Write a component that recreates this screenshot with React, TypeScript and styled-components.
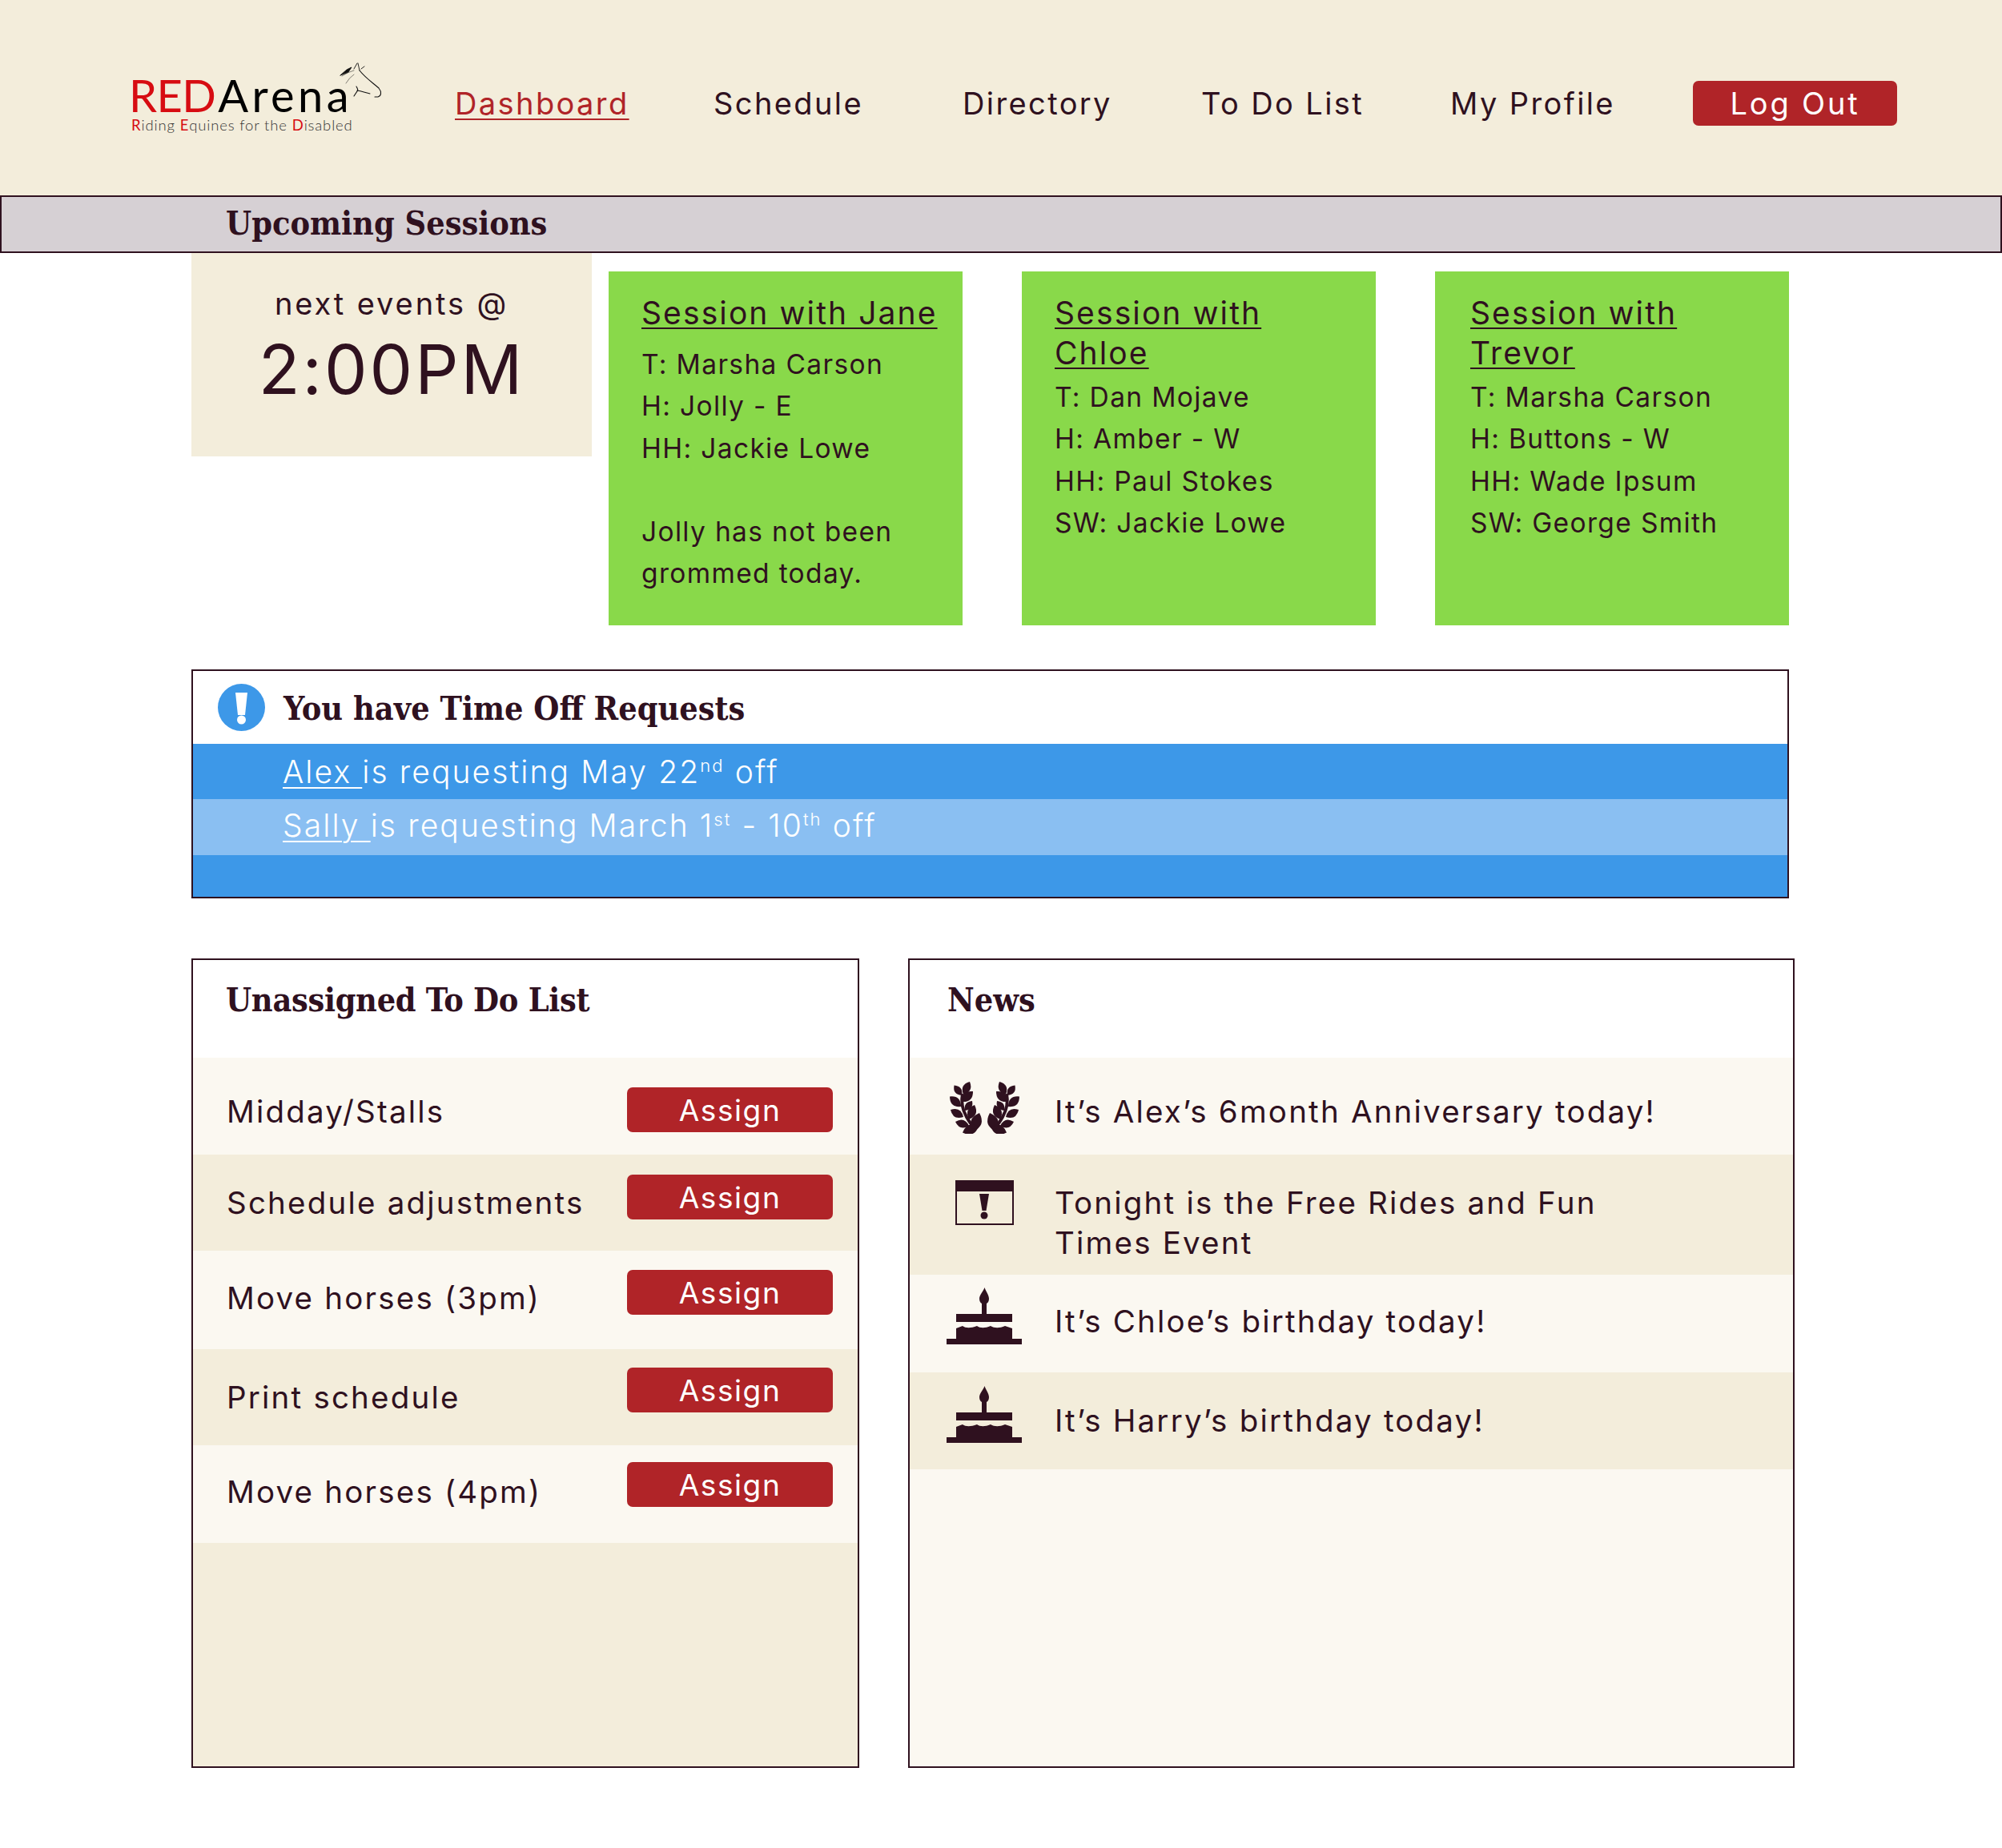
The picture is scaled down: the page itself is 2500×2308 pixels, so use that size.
import styled, { createGlobalStyle } from "styled-components";

const dark = "#2f111f";
const cream = "#f3eddb";
const offWhite = "#fbf8f1";
const red = "#b02428";

const GlobalStyle = createGlobalStyle`
	html, body {
		margin: 0;
		padding: 0;
		background: #fff;
	}
	body {
		font-family: "Inter", "Liberation Sans", sans-serif;
		color: ${dark};
	}
`;

const Page = styled.div`
	width: 2500px;
	height: 2308px;
	overflow: hidden;
`;

const Header = styled.header`
	display: flex;
	align-items: flex-start;
	height: 244px;
	box-sizing: border-box;
	background: ${cream};
`;

const Logo = styled.div`
	position: relative;
	margin: 92px 0 0 161px;
	width: 407px;
`;

const LogoName = styled.div`
	font-family: "Lato", sans-serif;
	font-size: 56px;
	line-height: 54px;
	color: #000;
	letter-spacing: 4.4px;
`;

const LogoRed = styled.span`
	color: #d70c12;
	letter-spacing: -0.6px;
	margin-right: 3px;
`;

const LogoTag = styled.div`
	font-family: "Lato", sans-serif;
	font-weight: 300;
	font-size: 18.5px;
	line-height: 20px;
	letter-spacing: 0.85px;
	color: #333;
	padding-left: 3px;
`;

const TagInitial = styled.span`
	color: #d70c12;
	font-weight: 400;
`;

const HorseMark = styled.div`
	position: absolute;
	left: 249px;
	top: -22px;
`;

const Nav = styled.nav`
	display: grid;
	grid-template-columns: 323px 311px 298px 311px 303px 255px;
	align-items: center;
	margin-top: 101px;
	height: 56px;
`;

const NavLink = styled.a<{ $active?: boolean }>`
	font-size: 38px;
	letter-spacing: 2.4px;
	font-weight: 400;
	color: ${(p) => (p.$active ? red : dark)};
	text-decoration: ${(p) => (p.$active ? "underline" : "none")};
	text-decoration-thickness: 2px;
	text-underline-offset: 5px;
`;

const LogOut = styled.button`
	height: 56px;
	width: 255px;
	border: 0;
	border-radius: 7px;
	background: ${red};
	color: #fff;
	font-family: inherit;
	font-size: 38px;
	letter-spacing: 2.8px;
	padding: 0;
`;

const SectionBar = styled.div`
	height: 72px;
	box-sizing: border-box;
	border: 2px solid ${dark};
	background: #d6d0d4;
	padding-left: 280px;
`;

const SectionTitle = styled.h2`
	margin: 0;
	font-family: "DejaVu Serif Condensed", "DejaVu Serif", serif;
	font-size: 41px;
	line-height: 66px;
	font-weight: 700;
`;

const Sessions = styled.section`
	display: flex;
	align-items: flex-start;
	margin-left: 239px;
`;

const NextBox = styled.div`
	width: 500px;
	height: 254px;
	margin-right: 21px;
	background: ${cream};
	text-align: center;
`;

const NextLabel = styled.div`
	font-size: 38px;
	letter-spacing: 2.9px;
	line-height: 50px;
	margin-top: 38px;
`;

const NextTime = styled.div`
	font-size: 85px;
	line-height: 100px;
	font-weight: 400;
	letter-spacing: 3px;
	margin-top: 8px;
`;

const Cards = styled.div`
	display: flex;
	gap: 74px;
	margin-top: 23px;
`;

const Card = styled.article<{ $pad: number }>`
	width: 442px;
	height: 442px;
	box-sizing: border-box;
	background: #89d94a;
	padding: 27px 0 0 ${(p) => p.$pad}px;
`;

const CardTitle = styled.h3<{ $gap: number }>`
	margin: 0 0 ${(p) => p.$gap}px;
	font-size: 39px;
	line-height: 50px;
	font-weight: 400;
	letter-spacing: 2.1px;
	text-decoration: underline;
	text-decoration-thickness: 2px;
	text-underline-offset: 4px;
`;

const CardLine = styled.div`
	font-size: 33.5px;
	line-height: 52.3px;
	letter-spacing: 1.35px;
	min-height: 52.3px;
`;

const Alert = styled.section`
	width: 1995px;
	height: 286px;
	box-sizing: border-box;
	margin: 55px 0 0 239px;
	border: 2px solid ${dark};
	background: #3d98e8;
`;

const AlertHead = styled.div`
	display: flex;
	align-items: center;
	gap: 23px;
	height: 91px;
	padding-left: 31px;
	background: #fff;
`;

const Heading = styled.h2<{ $tight?: boolean }>`
	margin: 2px 0 0;
	font-family: "DejaVu Serif Condensed", "DejaVu Serif", serif;
	font-size: 41px;
	font-weight: 700;
	letter-spacing: ${(p) => (p.$tight ? "-0.3px" : "0")};
`;

const RequestRow = styled.div<{ $light?: boolean }>`
	height: ${(p) => (p.$light ? 70 : 69)}px;
	line-height: ${(p) => (p.$light ? 66 : 70)}px;
	padding-left: 112px;
	background: ${(p) => (p.$light ? "#8abff2" : "transparent")};
	color: #fff;
	font-size: 39px;
	letter-spacing: 2.1px;
	font-weight: 300;
	u {
		text-decoration-thickness: 2px;
		text-underline-offset: 5px;
	}
	sup {
		font-size: 22px;
		line-height: 0;
		vertical-align: 14px;
	}
`;

const Panels = styled.div`
	display: flex;
	gap: 61px;
	margin: 75px 0 0 239px;
`;

const Panel = styled.section<{ $width: number; $fill: string }>`
	width: ${(p) => p.$width}px;
	height: 1011px;
	box-sizing: border-box;
	border: 2px solid ${dark};
	background: ${(p) => p.$fill};
`;

const PanelHead = styled.div<{ $pad: number }>`
	height: 122px;
	padding: 24px 0 0 ${(p) => p.$pad}px;
	box-sizing: border-box;
	background: #fff;
`;

const TodoRow = styled.div<{ $alt?: boolean; $height: number }>`
	display: flex;
	justify-content: space-between;
	height: ${(p) => p.$height}px;
	padding: 0 31px 0 42px;
	background: ${(p) => (p.$alt ? cream : offWhite)};
`;

const RowText = styled.span<{ $top: number }>`
	font-size: 38.5px;
	line-height: 50px;
	letter-spacing: 2.2px;
	padding-top: ${(p) => p.$top}px;
`;

const AssignButton = styled.button<{ $top: number }>`
	width: 257px;
	height: 56px;
	margin-top: ${(p) => p.$top}px;
	border: 0;
	border-radius: 7px;
	background: ${red};
	color: #fff;
	font-family: inherit;
	font-size: 37px;
	letter-spacing: 1.6px;
	padding: 0;
`;

const NewsRow = styled.div<{ $alt?: boolean; $height: number }>`
	display: flex;
	align-items: flex-start;
	height: ${(p) => p.$height}px;
	background: ${(p) => (p.$alt ? cream : "transparent")};
`;

const IconSlot = styled.div<{ $top: number; $left: number }>`
	width: ${(p) => 181 - p.$left}px;
	padding: ${(p) => p.$top}px 0 0 ${(p) => p.$left}px;
	line-height: 0;
`;

const Wheat = () => {
	// base x, base y, tip x, tip y: left sprig, traced from the reference
	const leaves = [
		[15, 17, 5.5, 4.5],
		[17, 16, 25, 0],
		[14, 31, 0, 18.5],
		[15, 25, 29, 12],
		[17, 44, 1, 35],
		[19, 36, 28, 24],
		[24, 47, 31, 29],
		[24, 55, 7, 50],
		[29, 62, 37, 39],
		[36, 56, 16, 63.5],
	];
	const leaf = (b: number[], key: string) => {
		const [bx, by, tx, ty] = b;
		const dx = tx - bx;
		const dy = ty - by;
		const mx = (bx + tx) / 2;
		const my = (by + ty) / 2;
		const w = 0.55;
		return (
			<path
				key={key}
				d={`M${bx} ${by}Q${mx - dy * w} ${my + dx * w} ${tx} ${ty}Q${mx + dy * w} ${my - dx * w} ${bx} ${by}Z`}
			/>
		);
	};
	const sprig = (prefix: string) => (
		<>
			{leaves.map((l, i) => leaf(l, prefix + i))}
			<path d="M16 15Q13 30 21 44T33 58" fill="none" stroke={dark} strokeWidth="4" />
		</>
	);
	return (
		<svg width="87" height="65" viewBox="0 0 87 65" fill={dark}>
			<g>{sprig("l")}</g>
			<g transform="translate(87 0) scale(-1 1)">{sprig("r")}</g>
		</svg>
	);
};

const CalendarAlert = () => (
	<svg width="73" height="56" viewBox="0 0 73 56">
		<rect x="1" y="1" width="71" height="54" fill="none" stroke={dark} strokeWidth="2" />
		<rect width="73" height="14" fill={dark} />
		<path d="M30 17H42L38.5 38H33.5Z" fill={dark} />
		<circle cx="36" cy="44" r="4.5" fill={dark} />
	</svg>
);

const Cake = () => (
	<svg width="95" height="71" viewBox="0 0 95 71" fill={dark}>
		<path d="M47.5 0C49 5 53 9 53 14C53 17 51.5 19.5 50 20V33H44V20C42.5 19.5 41 17 41 14C41 9 46 5 47.5 0Z" />
		<rect x="12" y="33" width="70" height="10" />
		<path d="M12 51L20 48C24 51 30 51 38 48C42 51 48 51 55 48C60 51 66 51 73 48L82 51V64H94V71H0V64H12Z" />
	</svg>
);

const AlertIcon = () => (
	<svg width="59" height="59" viewBox="0 0 59 59">
		<circle cx="29.5" cy="29.5" r="29.5" fill="#3d98e8" />
		<path d="M22 11H37L34 39H25Z" fill="#fff" />
		<circle cx="29.5" cy="45" r="5.5" fill="#fff" />
	</svg>
);

const Horse = () => (
	<svg viewBox="0 0 80 70" width="80" height="70" fill="none" stroke="#111" strokeWidth="0.9" strokeLinecap="round">
		<path d="M15 24L23 17L29 14L25 20Z" fill="#111" />
		<path d="M17 25Q24 20 32 18M22 34Q26 27 32 23" strokeWidth="0.5" />
		<path d="M32 16L36 9M37 9L39 18M41 16L45 13" />
		<path d="M39 18C46 27 55 33 63 40C67 45 66 50 62 51L58 51" strokeWidth="1.1" />
		<path d="M35 38Q38 43 36 44L32 50M36 43C42 44 47 46 52 47" strokeWidth="1.1" />
	</svg>
);

const navItems = ["Dashboard", "Schedule", "Directory", "To Do List", "My Profile"];

const todos = [
	{ label: "Midday/Stalls", height: 121, text: 42, button: 37 },
	{ label: "Schedule adjustments", height: 120, text: 35, button: 25 },
	{ label: "Move horses (3pm)", height: 123, text: 34, button: 24 },
	{ label: "Print schedule", height: 120, text: 35, button: 23 },
	{ label: "Move horses (4pm)", height: 122, text: 33, button: 21 },
];

export default function App() {
	return (
		<Page>
			<GlobalStyle />
			<Header>
				<Logo>
					<LogoName>
						<LogoRed>RED</LogoRed>Arena
					</LogoName>
					<LogoTag>
						<TagInitial>R</TagInitial>iding <TagInitial>E</TagInitial>quines for the <TagInitial>D</TagInitial>isabled
					</LogoTag>
					<HorseMark>
						<Horse />
					</HorseMark>
				</Logo>
				<Nav>
					{navItems.map((item, i) => (
						<NavLink key={item} $active={i === 0}>
							{item}
						</NavLink>
					))}
					<LogOut>Log Out</LogOut>
				</Nav>
			</Header>

			<SectionBar>
				<SectionTitle>Upcoming Sessions</SectionTitle>
			</SectionBar>

			<Sessions>
				<NextBox>
					<NextLabel>next events @</NextLabel>
					<NextTime>2:00PM</NextTime>
				</NextBox>
				<Cards>
					<Card $pad={41}>
						<CardTitle $gap={13}>Session with Jane</CardTitle>
						<CardLine>T: Marsha Carson</CardLine>
						<CardLine>H: Jolly - E</CardLine>
						<CardLine>HH: Jackie Lowe</CardLine>
						<CardLine />
						<CardLine>Jolly has not been</CardLine>
						<CardLine>grommed today.</CardLine>
					</Card>
					<Card $pad={41}>
						<CardTitle $gap={4}>
							Session with
							<br />
							Chloe
						</CardTitle>
						<CardLine>T: Dan Mojave</CardLine>
						<CardLine>H: Amber - W</CardLine>
						<CardLine>HH: Paul Stokes</CardLine>
						<CardLine>SW: Jackie Lowe</CardLine>
					</Card>
					<Card $pad={44}>
						<CardTitle $gap={4}>
							Session with
							<br />
							Trevor
						</CardTitle>
						<CardLine>T: Marsha Carson</CardLine>
						<CardLine>H: Buttons - W</CardLine>
						<CardLine>HH: Wade Ipsum</CardLine>
						<CardLine>SW: George Smith</CardLine>
					</Card>
				</Cards>
			</Sessions>

			<Alert>
				<AlertHead>
					<AlertIcon />
					<Heading>You have Time Off Requests</Heading>
				</AlertHead>
				<RequestRow>
					<u>Alex </u>is requesting May 22<sup>nd</sup> off
				</RequestRow>
				<RequestRow $light>
					<u>Sally </u>is requesting March 1<sup>st</sup> - 10<sup>th</sup> off
				</RequestRow>
			</Alert>

			<Panels>
				<Panel $width={834} $fill={cream}>
					<PanelHead $pad={41}>
						<Heading $tight>Unassigned To Do List</Heading>
					</PanelHead>
					{todos.map((todo, i) => (
						<TodoRow key={todo.label} $alt={i % 2 === 1} $height={todo.height}>
							<RowText $top={todo.text}>{todo.label}</RowText>
							<AssignButton $top={todo.button}>Assign</AssignButton>
						</TodoRow>
					))}
				</Panel>
				<Panel $width={1107} $fill={offWhite}>
					<PanelHead $pad={47}>
						<Heading>News</Heading>
					</PanelHead>
					<NewsRow $height={121}>
						<IconSlot $top={30} $left={50}>
							<Wheat />
						</IconSlot>
						<RowText $top={42}>It’s Alex’s 6month Anniversary today!</RowText>
					</NewsRow>
					<NewsRow $alt $height={150}>
						<IconSlot $top={32} $left={57}>
							<CalendarAlert />
						</IconSlot>
						<RowText $top={35}>
							Tonight is the Free Rides and Fun
							<br />
							Times Event
						</RowText>
					</NewsRow>
					<NewsRow $height={122}>
						<IconSlot $top={16} $left={46}>
							<Cake />
						</IconSlot>
						<RowText $top={33}>It’s Chloe’s birthday today!</RowText>
					</NewsRow>
					<NewsRow $alt $height={121}>
						<IconSlot $top={17} $left={46}>
							<Cake />
						</IconSlot>
						<RowText $top={35}>It’s Harry’s birthday today!</RowText>
					</NewsRow>
				</Panel>
			</Panels>
		</Page>
	);
}
